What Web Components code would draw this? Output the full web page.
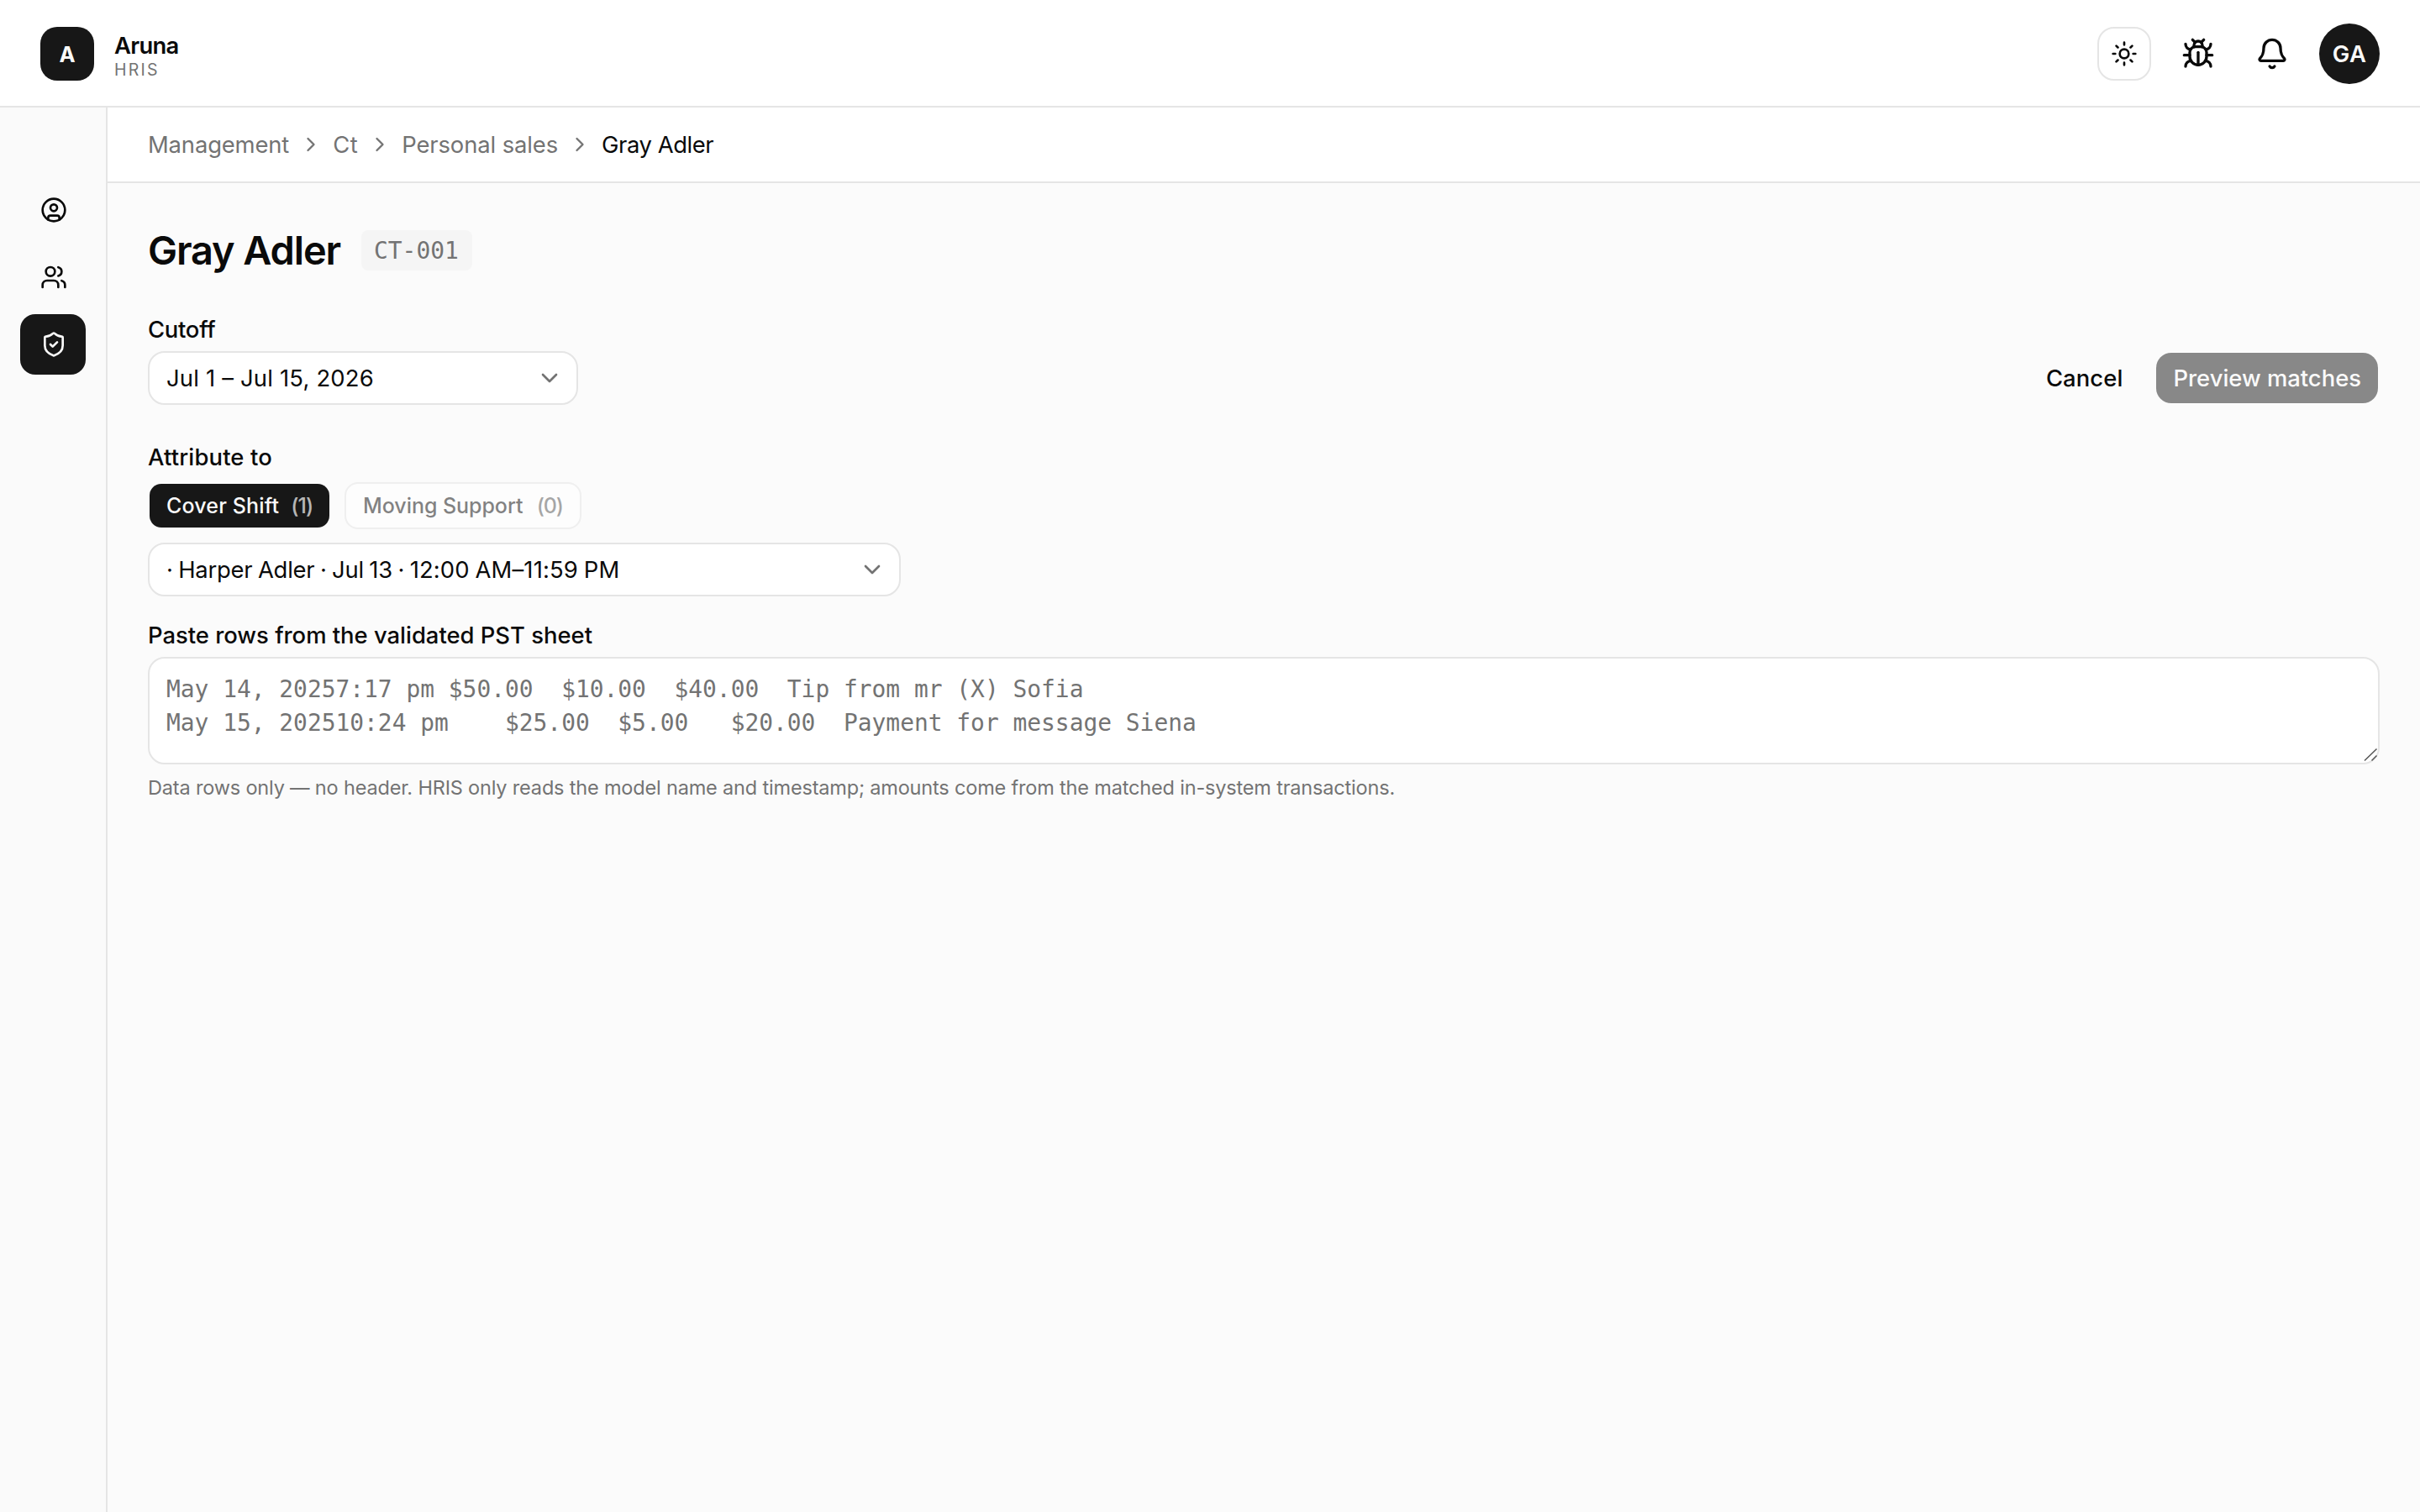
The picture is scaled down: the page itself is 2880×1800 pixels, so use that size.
<!DOCTYPE html>
<html lang="en">
<head>
<meta charset="utf-8">
<title>Gray Adler - Personal sales</title>
<style>
    html, body { margin: 0; height: 100%; }

    body {
        --text: #0a0a0a;
        --muted: #737373;
        --border: #e5e5e5;
        --primary: #171717;
        --sans: Inter, "Liberation Sans", sans-serif;
        --mono: "DejaVu Sans Mono", "Liberation Mono", monospace;
        font: 400 27.4px/40px var(--sans);
        color: var(--text);
        background: #fff;
    }
</style>
</head>
<body>

<app-shell>
    <app-header slot="header" initial="A" name="Aruna" product="HRIS" user="GA"></app-header>

    <nav-item slot="nav" icon="account"></nav-item>
    <nav-item slot="nav" icon="users"></nav-item>
    <nav-item slot="nav" icon="shield" active></nav-item>

    <bread-crumbs slot="crumbs">
        <span style="letter-spacing:-.14px">Management</span>
        <span style="letter-spacing:.5px">Ct</span>
        <span style="letter-spacing:-.1px">Personal sales</span>
        <span style="letter-spacing:-.43px">Gray Adler</span>
    </bread-crumbs>

    <page-title code="CT-001">Gray Adler</page-title>

    <form-field label="Cutoff" tracking="-.25px" gap="12px">
        <field-row>
            <select-box style="width:512px; letter-spacing:.2px">Jul 1 – Jul 15, 2026</select-box>
            <ui-button slot="actions" variant="ghost" style="letter-spacing:.1px">Cancel</ui-button>
            <ui-button slot="actions" disabled>Preview matches</ui-button>
        </field-row>
    </form-field>

    <form-field label="Attribute to" tracking=".17px" gap="16px">
        <chip-group>
            <choice-chip count="1" selected style="width:218px; letter-spacing:.15px">Cover Shift</choice-chip>
            <choice-chip count="0" disabled style="width:282px; letter-spacing:-.05px">Moving Support</choice-chip>
        </chip-group>
        <select-box style="width:896px; letter-spacing:-.215px; word-spacing:-1px">· Harper Adler · Jul 13 · <span style="letter-spacing:.15px">12:00 AM–11:59 PM</span></select-box>
    </form-field>

    <form-field class="paste" label="Paste rows from the validated PST sheet" gap="12px">
        <paste-area>May 14, 20257:17 pm $50.00  $10.00  $40.00  Tip from mr (X) Sofia
May 15, 202510:24 pm    $25.00  $5.00   $20.00  Payment for message Siena</paste-area>
        <help-text>Data rows only — no header. HRIS only reads the model name and timestamp; amounts come from the matched in-system transactions.</help-text>
    </form-field>
</app-shell>

<script>
const ICONS = {
    sun: '<circle cx="12" cy="12" r="4"/><path d="M12 2v2M12 20v2M4.93 4.93l1.41 1.41M17.66 17.66l1.41 1.41M2 12h2M20 12h2M6.34 17.66l-1.41 1.41M19.07 4.93l-1.41 1.41"/>',
    bug: '<path d="M12 20v-9"/><path d="M14 7a4 4 0 0 1 4 4v3a6 6 0 0 1-12 0v-3a4 4 0 0 1 4-4z"/><path d="M14.12 3.88 16 2"/><path d="M21 21a4 4 0 0 0-3.81-4"/><path d="M21 5a4 4 0 0 1-3.55 3.97"/><path d="M22 13h-4"/><path d="M3 21a4 4 0 0 1 3.81-4"/><path d="M3 5a4 4 0 0 0 3.55 3.97"/><path d="M6 13H2"/><path d="m8 2 1.88 1.88"/><path d="M9 7.13V6a3 3 0 1 1 6 0v1.13"/>',
    bell: '<path d="M10.268 21a2 2 0 0 0 3.464 0"/><path d="M3.262 15.326A1 1 0 0 0 4 17h16a1 1 0 0 0 .74-1.673C19.41 13.956 18 12.499 18 8A6 6 0 0 0 6 8c0 4.499-1.411 5.956-2.738 7.326"/>',
    account: '<circle cx="12" cy="12" r="10"/><circle cx="12" cy="10" r="3"/><path d="M7 20.662V19a2 2 0 0 1 2-2h6a2 2 0 0 1 2 2v1.662"/>',
    users: '<path d="M16 21v-2a4 4 0 0 0-4-4H6a4 4 0 0 0-4 4v2"/><circle cx="9" cy="7" r="4"/><path d="M22 21v-2a4 4 0 0 0-3-3.87"/><path d="M16 3.13a4 4 0 0 1 0 7.75"/>',
    shield: '<path d="M20 13c0 5-3.5 7.5-7.66 8.95a1 1 0 0 1-.67-.01C7.5 20.5 4 18 4 13V6a1 1 0 0 1 1-1c2 0 4.5-1.2 6.24-2.72a1.17 1.17 0 0 1 1.52 0C14.51 3.81 17 5 19 5a1 1 0 0 1 1 1z"/><path d="m9 12 2 2 4-4"/>',
    right: '<path d="m9 18 6-6-6-6"/>',
    down: '<path d="m6 9 6 6 6-6"/>',
};

const icon = (name, size) =>
    `<svg width="${size}" height="${size}" viewBox="0 0 24 24" fill="none" stroke="currentColor" stroke-width="2" stroke-linecap="round" stroke-linejoin="round" aria-hidden="true">${ICONS[name]}</svg>`;

// Shared base: each element only supplies its own markup
class UiElement extends HTMLElement {
    constructor() {
        super();
        this.attachShadow({ mode: 'open' });
    }

    connectedCallback() {
        this.shadowRoot.innerHTML = `
            <style>
            * { box-sizing: border-box; }
            :host { box-sizing: border-box; display: block; }
            svg { display: block; flex-shrink: 0; }
            </style>
            ${this.render()}`;
    }
}

class AppShell extends UiElement {
    render() {
        return `
            <style>
            :host { display: flex; flex-direction: column; height: 100vh; overflow: hidden; }
            .body { flex: 1; display: flex; min-height: 0; }
            nav {
                width: 128px;
                padding: 86px 0 0 24px;
                display: flex;
                flex-direction: column;
                gap: 8px;
                background: #fafafa;
                border-right: 2px solid var(--border);
            }
            .page { flex: 1; display: flex; flex-direction: column; }
            main {
                flex: 1;
                padding: 48px;
                display: flex;
                flex-direction: column;
                gap: 48px;
                background: #fbfbfb;
            }
            ::slotted(.paste) { margin-top: -16px; }
            </style>
            <slot name="header"></slot>
            <div class="body">
                <nav><slot name="nav"></slot></nav>
                <div class="page">
                    <slot name="crumbs"></slot>
                    <main><slot></slot></main>
                </div>
            </div>`;
    }
}

class AppHeader extends UiElement {
    render() {
        return `
            <style>
            :host {
                display: flex;
                align-items: flex-start;
                justify-content: space-between;
                height: 128px;
                padding: 0 48px;
                border-bottom: 2px solid var(--border);
                background: #fff;
            }
            .brand, .tools { display: flex; align-items: center; gap: 24px; height: 128px; }
            .logo {
                width: 64px;
                height: 64px;
                border-radius: 20px;
                background: var(--primary);
                color: #fafafa;
                font-size: 25.6px;
                font-weight: 700;
                line-height: 65px;
                text-align: center;
            }
            .name { font-weight: 600; line-height: 38px; letter-spacing: -.7px; }
            .product { font-size: 19.5px; line-height: 20px; letter-spacing: 2.2px; color: var(--muted); }
            .tool { width: 64px; height: 64px; display: flex; align-items: center; justify-content: center; }
            .outlined { border: 2px solid var(--border); border-radius: 20px; }
            .avatar {
                width: 72px;
                height: 72px;
                border-radius: 50%;
                background: var(--primary);
                color: #fafafa;
                font-weight: 600;
                line-height: 72px;
                letter-spacing: .4px;
                text-align: center;
            }
            </style>
            <div class="brand">
                <div class="logo">${this.getAttribute('initial')}</div>
                <div>
                    <div class="name">${this.getAttribute('name')}</div>
                    <div class="product">${this.getAttribute('product')}</div>
                </div>
            </div>
            <div class="tools">
                <div class="tool outlined">${icon('sun', 32)}</div>
                <div class="tool">${icon('bug', 40)}</div>
                <div class="tool">${icon('bell', 40)}</div>
                <div class="avatar">${this.getAttribute('user')}</div>
            </div>`;
    }
}

class NavItem extends UiElement {
    render() {
        return `
            <style>
            :host { width: 78px; height: 72px; padding: 20px 24px; border-radius: 18px; }
            :host([active]) { background: var(--primary); color: #fafafa; }
            </style>
            ${icon(this.getAttribute('icon'), 32)}`;
    }
}

class BreadCrumbs extends UiElement {
    render() {
        const items = [...this.children];
        items.forEach((el, i) => { el.slot = `c${i}`; });
        return `
            <style>
            :host {
                display: flex;
                align-items: center;
                gap: 12px;
                height: 90px;
                padding: 0 48px;
                border-bottom: 2px solid var(--border);
                background: #fff;
                color: var(--muted);
            }
            ::slotted(:last-child) { color: var(--text); }
            </style>
            ${items.map((_, i) => `<slot name="c${i}"></slot>`).join(icon('right', 28))}`;
    }
}

class PageTitle extends UiElement {
    render() {
        return `
            <style>
            :host { display: flex; align-items: center; gap: 25px; height: 64px; }
            h1 { margin: 0; font-size: 46.9px; font-weight: 600; line-height: 64px; letter-spacing: -1.11px; }
            .code {
                height: 48px;
                padding: 0 16px 0 15px;
                border-radius: 8px;
                background: #f5f5f5;
                color: var(--muted);
                font: 27.9px/50px var(--mono);
            }
            </style>
            <h1><slot></slot></h1>
            <span class="code">${this.getAttribute('code')}</span>`;
    }
}

class FormField extends UiElement {
    render() {
        return `
            <style>
            :host { display: flex; flex-direction: column; align-items: stretch; }
            .label {
                margin-bottom: ${this.getAttribute('gap')};
                font-weight: 500;
                line-height: 28px;
                letter-spacing: ${this.getAttribute('tracking') || 'normal'};
            }
            </style>
            <div class="label">${this.getAttribute('label')}</div>
            <slot></slot>`;
    }
}

class FieldRow extends UiElement {
    render() {
        return `
            <style>
            :host, .actions { display: flex; align-items: center; }
            :host { justify-content: space-between; }
            .actions { gap: 16px; }
            </style>
            <slot></slot>
            <div class="actions"><slot name="actions"></slot></div>`;
    }
}

class SelectBox extends UiElement {
    render() {
        return `
            <style>
            :host {
                display: flex;
                align-items: center;
                justify-content: space-between;
                height: 64px;
                padding: 0 16px 0 20px;
                border: 2px solid var(--border);
                border-radius: 20px;
                background: #fff;
                white-space: nowrap;
            }
            svg { color: var(--muted); }
            </style>
            <span><slot></slot></span>
            ${icon('down', 32)}`;
    }
}

class UiButton extends UiElement {
    render() {
        return `
            <style>
            :host {
                height: 64px;
                padding: 0 20px;
                border: 2px solid transparent;
                border-radius: 20px;
                background: var(--primary);
                background-clip: padding-box;
                color: #fafafa;
                font-weight: 500;
                line-height: 60px;
            }
            :host([variant="ghost"]) { background: none; color: var(--text); }
            :host([disabled]) { background-color: #888; }
            </style>
            <slot></slot>`;
    }
}

class ChipGroup extends UiElement {
    render() {
        return `
            <style>
            :host { display: flex; gap: 16px; margin-bottom: 16px; }
            </style>
            <slot></slot>`;
    }
}

class ChoiceChip extends UiElement {
    render() {
        return `
            <style>
            :host {
                display: flex;
                align-items: center;
                justify-content: space-between;
                height: 56px;
                padding: 0 20px;
                border: 2px solid var(--border);
                border-radius: 16px;
                background: #fff;
                font-size: 25px;
                font-weight: 500;
                white-space: nowrap;
            }
            :host([selected]) {
                border-color: transparent;
                background: var(--primary);
                background-clip: padding-box;
                color: #fafafa;
            }
            :host([disabled]) { opacity: .5; }
            .count { opacity: .7; letter-spacing: -1.1px; }
            </style>
            <span><slot></slot></span>
            <span class="count">(${this.getAttribute('count')})</span>`;
    }
}

class PasteArea extends UiElement {
    render() {
        return `
            <style>
            :host {
                position: relative;
                height: 128px;
                padding: 17px 20px 0;
                border: 2px solid var(--border);
                border-radius: 20px;
                background: #fff;
                color: var(--muted);
                font: 27.9px/40px var(--mono);
            }
            .rows { white-space: pre; }
            .grip { position: absolute; right: 0; bottom: 0; }
            </style>
            <div class="rows"><slot></slot></div>
            <svg class="grip" width="18" height="18" viewBox="0 0 18 18" stroke="#555" stroke-width="1.5"><path d="M2 15.5 16.5 1.5M10.5 15.5 16.5 9.5"/></svg>`;
    }
}

class HelpText extends UiElement {
    render() {
        return `
            <style>
            :host { margin-top: 12px; font-size: 23.5px; line-height: 32px; letter-spacing: -.175px; color: var(--muted); }
            </style>
            <slot></slot>`;
    }
}

customElements.define('app-shell', AppShell);
customElements.define('app-header', AppHeader);
customElements.define('nav-item', NavItem);
customElements.define('bread-crumbs', BreadCrumbs);
customElements.define('page-title', PageTitle);
customElements.define('form-field', FormField);
customElements.define('field-row', FieldRow);
customElements.define('select-box', SelectBox);
customElements.define('ui-button', UiButton);
customElements.define('chip-group', ChipGroup);
customElements.define('choice-chip', ChoiceChip);
customElements.define('paste-area', PasteArea);
customElements.define('help-text', HelpText);
</script>
</body>
</html>
